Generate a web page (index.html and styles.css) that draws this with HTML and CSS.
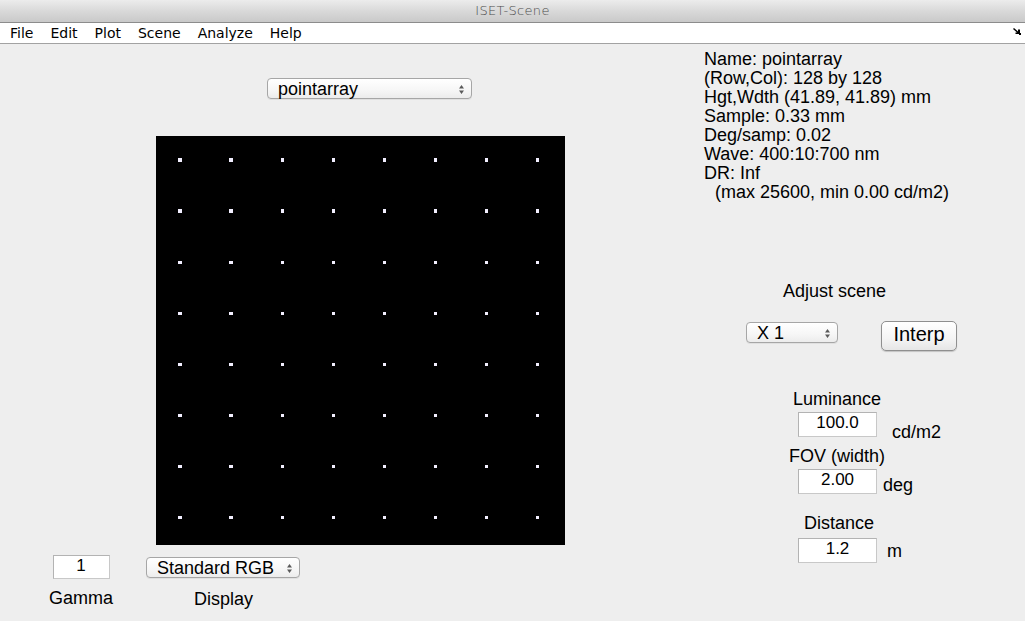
FILE: index.html
```html
<!DOCTYPE html>
<html>
<head>
<meta charset="utf-8">
<title>ISET-Scene</title>
<link rel="stylesheet" href="styles.css">
</head>
<body>
<div class="window">
  <div class="titlebar">ISET-Scene</div>
  <div class="menubar">
    <span class="menu">File</span>
    <span class="menu">Edit</span>
    <span class="menu">Plot</span>
    <span class="menu">Scene</span>
    <span class="menu">Analyze</span>
    <span class="menu">Help</span>
    <span class="spacer"></span>
    <svg class="resize" width="8" height="7" viewBox="0 0 8 7"><path d="M0 1 L1 0 L5 3.5 L5 1.5 L7 1.5 L7 6 L2.5 6 L2.5 4.5 L4 4.5 Z" fill="#000"/><rect x="6" y="5" width="2" height="2" fill="#000"/></svg>
  </div>
  <div class="main">
    <div class="left">
      <div class="popup scene-popup"><span class="plabel">pointarray</span><svg class="arrows" width="5" height="9" viewBox="0 0 5 9"><path d="M0 3.5 L2.5 0 L5 3.5 Z M0 5.5 L5 5.5 L2.5 9 Z" fill="#5a5a5a"/></svg></div>
      <div class="image">
        <svg width="409" height="409" viewBox="0 0 128 128" shape-rendering="crispEdges">
          <defs>
            <g id="row">
              <rect x="7" y="7" width="1" height="1"/>
              <rect x="23" y="7" width="1" height="1"/>
              <rect x="39" y="7" width="1" height="1"/>
              <rect x="55" y="7" width="1" height="1"/>
              <rect x="71" y="7" width="1" height="1"/>
              <rect x="87" y="7" width="1" height="1"/>
              <rect x="103" y="7" width="1" height="1"/>
              <rect x="119" y="7" width="1" height="1"/>
            </g>
          </defs>
          <rect x="0" y="0" width="128" height="128" fill="#000"/>
          <g fill="#f2efff">
            <use href="#row" y="0"/>
            <use href="#row" y="16"/>
            <use href="#row" y="32"/>
            <use href="#row" y="48"/>
            <use href="#row" y="64"/>
            <use href="#row" y="80"/>
            <use href="#row" y="96"/>
            <use href="#row" y="112"/>
          </g>
        </svg>
      </div>
      <div class="bottom">
        <div class="gamma-group">
          <div class="field gamma-field">1</div>
          <div class="glabel">Gamma</div>
        </div>
        <div class="display-group">
          <div class="popup display-popup"><span class="plabel">Standard RGB</span><svg class="arrows" width="5" height="9" viewBox="0 0 5 9"><path d="M0 3.5 L2.5 0 L5 3.5 Z M0 5.5 L5 5.5 L2.5 9 Z" fill="#5a5a5a"/></svg></div>
          <div class="dlabel">Display</div>
        </div>
      </div>
    </div>
    <div class="right">
      <div class="info">
        <div>Name: pointarray</div>
        <div>(Row,Col): 128 by 128</div>
        <div>Hgt,Wdth (41.89, 41.89) mm</div>
        <div>Sample: 0.33 mm</div>
        <div>Deg/samp: 0.02</div>
        <div>Wave: 400:10:700 nm</div>
        <div>DR: Inf</div>
        <div class="indent">(max 25600, min 0.00 cd/m2)</div>
      </div>
      <div class="adjust-label">Adjust scene</div>
      <div class="adjust-row">
        <div class="popup x-popup"><span class="plabel">X 1</span><svg class="arrows" width="5" height="9" viewBox="0 0 5 9"><path d="M0 3.5 L2.5 0 L5 3.5 Z M0 5.5 L5 5.5 L2.5 9 Z" fill="#5a5a5a"/></svg></div>
        <div class="button">Interp</div>
      </div>
      <div class="label lum-label">Luminance</div>
      <div class="row lum-row">
        <div class="field">100.0</div>
        <div class="unit lum-unit">cd/m2</div>
      </div>
      <div class="label fov-label">FOV (width)</div>
      <div class="row fov-row">
        <div class="field">2.00</div>
        <div class="unit fov-unit">deg</div>
      </div>
      <div class="label dist-label">Distance</div>
      <div class="row dist-row">
        <div class="field">1.2</div>
        <div class="unit dist-unit">m</div>
      </div>
    </div>
  </div>
</div>
</body>
</html>
```

FILE: styles.css
```css
html, body {
  margin: 0;
  padding: 0;
}
body {
  width: 1025px;
  height: 621px;
  overflow: hidden;
  background: #eeeeee;
  font-family: "Liberation Sans", Arial, sans-serif;
  font-size: 18px;
  line-height: 19px;
  color: #000;
}
.window {
  display: flex;
  flex-direction: column;
  height: 621px;
}
.titlebar {
  height: 22px;
  border-bottom: 1px solid #8c8c8c;
  background: linear-gradient(#ececec, #d9d9d9 50%, #c9c9c9);
  text-align: center;
  font-family: "DejaVu Sans", sans-serif;
  font-weight: 200;
  font-size: 13px;
  line-height: 22px;
  color: #4d4d4d;
  letter-spacing: 0.3px;
}
.menubar {
  height: 20px;
  border-bottom: 1px solid #a2a2a2;
  background: #ffffff;
  display: flex;
  align-items: center;
  padding-left: 10px;
  padding-right: 4px;
  gap: 17px;
  font-family: "DejaVu Sans", sans-serif;
  font-size: 14px;
  line-height: 20px;
}
.menubar .spacer {
  flex: 1;
}
.resize {
  margin-top: -4px;
}
.main {
  flex: 1;
  display: flex;
}
.left {
  width: 700px;
  display: flex;
  flex-direction: column;
  align-items: flex-start;
}
.popup {
  box-sizing: border-box;
  height: 21px;
  display: flex;
  align-items: center;
  border: 1px solid #a6a6a6;
  border-radius: 4px;
  background: linear-gradient(#ffffff, #f6f6f6 60%, #ececec);
  box-shadow: 0 1px 0 rgba(0, 0, 0, 0.06);
  padding: 1px 7px 0 10px;
  font-size: 18px;
  line-height: 19px;
}
.popup .plabel {
  flex: 1;
}
.scene-popup {
  margin-top: 34px;
  margin-left: 267px;
  width: 205px;
}
.image {
  margin-top: 37px;
  margin-left: 156px;
  width: 409px;
  height: 409px;
  background: #000;
}
.image svg {
  display: block;
}
.bottom {
  display: flex;
  align-items: flex-start;
  margin-top: 10px;
}
.gamma-group {
  margin-left: 49px;
  width: 64px;
  display: flex;
  flex-direction: column;
  align-items: center;
}
.field {
  box-sizing: border-box;
  width: 79px;
  height: 25px;
  border: 1px solid #b3b3b3;
  border-bottom-color: #c8c8c8;
  border-right-color: #c8c8c8;
  background: #ffffff;
  text-align: center;
  font-size: 17px;
  line-height: 19px;
}
.gamma-field {
  width: 57px;
  height: 24px;
}
.glabel {
  margin-top: 10px;
}
.display-group {
  margin-left: 33px;
  display: flex;
  flex-direction: column;
  align-items: flex-start;
}
.display-popup {
  margin-top: 2px;
  width: 154px;
}
.dlabel {
  margin-top: 12px;
  margin-left: 48px;
}
.right {
  flex: 1;
  display: flex;
  flex-direction: column;
  align-items: flex-start;
  padding-left: 4px;
}
.info {
  margin-top: 6px;
}
.info .indent {
  padding-left: 11px;
}
.adjust-label {
  margin-top: 80px;
  margin-left: 79px;
}
.adjust-row {
  display: flex;
  align-items: flex-start;
  margin-top: 20px;
}
.x-popup {
  margin-left: 42px;
  margin-top: 1px;
  width: 92px;
}
.button {
  box-sizing: border-box;
  margin-left: 43px;
  width: 76px;
  height: 30px;
  border: 1px solid #8f8f8f;
  border-radius: 5px;
  background: linear-gradient(#ffffff, #f4f4f4 60%, #e6e6e6);
  box-shadow: 0 1px 1px rgba(0, 0, 0, 0.18);
  text-align: center;
  font-size: 20px;
  line-height: 25px;
}
.row {
  display: flex;
  align-items: flex-start;
  margin-left: 94px;
}
.lum-label {
  margin-top: 39px;
  margin-left: 89px;
}
.lum-row {
  margin-top: 3px;
}
.lum-unit {
  margin-left: 15px;
  margin-top: 11px;
}
.fov-label {
  margin-top: 5px;
  margin-left: 85px;
}
.fov-row {
  margin-top: 3px;
}
.fov-unit {
  margin-left: 6px;
  margin-top: 7px;
}
.dist-label {
  margin-top: 19px;
  margin-left: 100px;
}
.dist-row {
  margin-top: 5px;
}
.dist-unit {
  margin-left: 10px;
  margin-top: 4px;
}
```
